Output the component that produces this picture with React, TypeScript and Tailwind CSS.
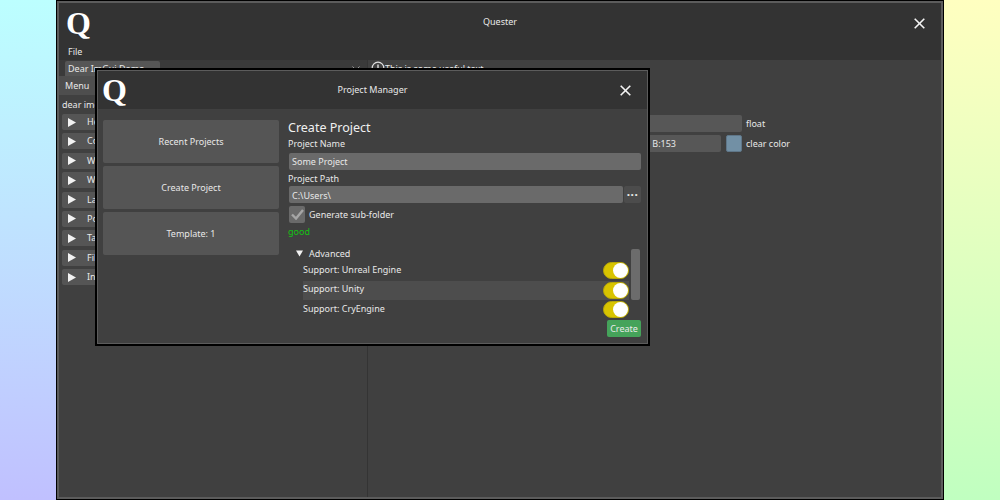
const font = { fontFamily: '"Noto Sans", sans-serif' };

function Close() {
  return (
    <svg width="11" height="11" viewBox="0 0 11 11" className="block">
      <path d="M0.7 0.7 L10.3 10.3 M10.3 0.7 L0.7 10.3" stroke="#f4f4f4" strokeWidth="1.6" fill="none" />
    </svg>
  );
}

function Logo() {
  return <span className="block text-[32px] leading-none font-bold text-white" style={{ fontFamily: '"Liberation Serif", serif' }}>Q</span>;
}

function Tri() {
  return (
    <svg width="8" height="9" viewBox="0 0 8 9" className="block shrink-0">
      <path d="M0 0 L8 4.5 L0 9 Z" fill="#f2f2f2" />
    </svg>
  );
}

function Toggle() {
  return (
    <div className="flex h-[17px] w-[26px] shrink-0 items-center justify-end rounded-full border border-[#b8a808] bg-[#d8c400]">
      <div className="h-[15px] w-[15px] rounded-full bg-white" />
    </div>
  );
}

function Side({ label, h }: { label: string; h: string }) {
  return (
    <div className={`flex ${h} items-center justify-center rounded-[2px] bg-[#555555]`}>{label}</div>
  );
}

function Support({ label, active }: { label: string; active?: boolean }) {
  return (
    <div className={`flex h-[19.5px] items-center justify-between ${active ? 'bg-[#4d4d4d]' : ''}`}>
      <span className="pb-[2px]">{label}</span>
      <Toggle />
    </div>
  );
}

export default function App() {
  const items = ['Help', 'Configuration', 'Window options', 'Widgets', 'Layout & Scrolling', 'Popups & Modal windows', 'Tables & Columns', 'Filtering', 'Inputs'];
  return (
    <div className="relative flex h-[500px] w-[1000px] overflow-hidden text-[9px] leading-[14px]" style={font}>
      <div className="w-[56px] shrink-0 bg-gradient-to-b from-[#bcffff] to-[#c0c0ff]" />
      <div className="h-full w-[888px] shrink-0 border border-black">
        <div className="flex h-full flex-col border-2 border-[#5c5c5c] bg-[#404040] text-[#e8e8e8]">
          <div className="grid h-[40px] shrink-0 grid-cols-3 items-center bg-[#333333] pl-[7px] pr-[16px]">
            <Logo />
            <span className="pb-[2px] pl-[9px] text-center">Quester</span>
            <div className="justify-self-end"><Close /></div>
          </div>
          <div className="flex h-[17px] shrink-0 items-center bg-[#333333] pl-[9px]">File</div>
          <div className="flex min-h-0 flex-1">
            <div className="flex w-[309px] shrink-0 flex-col border-r border-[#343434]">
              <div className="flex h-[16px] shrink-0 items-end justify-between bg-[#3a3a3a] pl-[6px] pr-[7px]">
                <div className="flex h-[15px] w-[95px] items-center rounded-t-[2px] bg-[#565656] pl-[3px]">Dear ImGui Demo</div>
                <svg width="8" height="5" viewBox="0 0 8 5" className="mb-[5px] block"><path d="M0.5 0.5 L4 4 L7.5 0.5" stroke="#9a9a9a" strokeWidth="1" fill="none" /></svg>
              </div>
              <div className="flex h-[19px] shrink-0 items-center bg-[#4e4e4e] pl-[6px]">Menu</div>
              <div className="flex h-[19px] shrink-0 items-center pl-[3px]">dear imgui says hello.</div>
              <div className="flex flex-col gap-[3.4px] px-[3px]">
                {items.map((t) => (
                  <div key={t} className="flex h-[16px] items-center gap-[11px] rounded-[2px] bg-[#555555] pl-[6px]">
                    <Tri />
                    <span>{t}</span>
                  </div>
                ))}
              </div>
            </div>
            <div className="flex flex-1 flex-col">
              <div className="flex h-[16px] shrink-0 items-start pl-[3px] pt-[1px]">
                <svg width="14" height="14" viewBox="0 0 14 14" className="block shrink-0">
                  <circle cx="7" cy="7" r="5.8" fill="none" stroke="#e0e0e0" strokeWidth="1.2" />
                  <path d="M7 3.5 V8 M7 9.4 V10.6" stroke="#e0e0e0" strokeWidth="1.4" />
                </svg>
                <span className="pt-[1px]">This is some useful text</span>
              </div>
              <div className="mt-[39px] flex h-[17px] items-center pl-[1px]">
                <div className="h-[17px] w-[373px] rounded-[2px] bg-[#575757]" />
                <span className="ml-[4px] pt-[1px]">float</span>
              </div>
              <div className="mt-[3px] flex h-[17px] items-center pl-[1px]">
                <div className="flex h-[17px] w-[352px] items-center justify-end rounded-[2px] bg-[#575757] pr-[45px] pt-[1px]">B:153</div>
                <div className="ml-[5px] h-[17px] w-[16px] rounded-[2px] border border-[#5f7688] bg-[#7290a5]" />
                <span className="ml-[4px] pt-[1px]">clear color</span>
              </div>
            </div>
          </div>
        </div>
      </div>
      <div className="w-[56px] shrink-0 bg-gradient-to-b from-[#ffffc0] to-[#c0ffc0]" />

      <div className="absolute left-[95px] top-[68px] h-[278px] w-[555px] border-2 border-black">
        <div className="flex h-full flex-col border border-[#5c5c5c] bg-[#404040] text-[#e8e8e8]">
          <div className="grid h-[38px] shrink-0 grid-cols-3 items-center bg-[#333333] pl-[4px] pr-[16px]">
            <Logo />
            <span className="pl-[12px] text-center">Project Manager</span>
            <div className="justify-self-end"><Close /></div>
          </div>
          <div className="flex flex-1 pl-[5px] pr-[6px] pt-[11px]">
            <div className="flex w-[176px] shrink-0 flex-col gap-[3px]">
              <Side label="Recent Projects" h="h-[43px]" />
              <Side label="Create Project" h="h-[43px]" />
              <Side label="Template: 1" h="h-[43px]" />
            </div>
            <div className="ml-[9px] flex min-w-0 flex-1 flex-col">
              <div className="h-[16px] text-[12.5px] leading-[16px] text-[#f0f0f0]">Create Project</div>
              <div className="flex h-[16px] items-center">Project Name</div>
              <div className="ml-[1px] mt-[1px] flex h-[17px] items-center rounded-[2px] bg-[#6a6a6a] pl-[3px] pt-[1px]">Some Project</div>
              <div className="flex h-[16px] items-center pt-[1px]">Project Path</div>
              <div className="ml-[1px] flex h-[17px] gap-[1px]">
                <div className="flex flex-1 items-center rounded-[2px] bg-[#6a6a6a] pl-[3px] pt-[2px]">C:\Users\</div>
                <div className="flex w-[17px] items-center justify-center rounded-[2px] bg-[#4c4c4c] pb-[6px] text-[12px] font-bold leading-none tracking-[0.5px]">...</div>
              </div>
              <div className="ml-[1px] mt-[3px] flex h-[17px] items-center gap-[4px]">
                <div className="flex h-[17px] w-[16px] items-center justify-center rounded-[2px] bg-[#6a6a6a]">
                  <svg width="13" height="11" viewBox="0 0 13 11"><path d="M1 5.5 L5 9.5 L12 1" stroke="#a6a6a6" strokeWidth="2.4" fill="none" /></svg>
                </div>
                <span>Generate sub-folder</span>
              </div>
              <div className="mt-[1px] flex h-[16px] items-center text-[#12c412]">good</div>
              <div className="mt-[6px] flex min-h-0">
                <div className="min-w-0 flex-1 pl-[8px]">
                  <div className="flex h-[15px] items-center gap-[6px]">
                    <svg width="7" height="7" viewBox="0 0 7 7" className="block"><path d="M0 0.5 H7 L3.5 6.5 Z" fill="#f2f2f2" /></svg>
                    <span>Advanced</span>
                  </div>
                  <div className="pl-[7px]">
                    <Support label="Support: Unreal Engine" />
                    <Support label="Support: Unity" active />
                    <Support label="Support: CryEngine" />
                  </div>
                </div>
                <div className="ml-[2px] mr-[1px] mt-[3px] h-[51px] w-[9px] rounded-[2px] bg-[#6c6c6c]" />
              </div>
              <div className="mt-[0.5px] flex justify-end">
                <div className="flex h-[17px] w-[34px] items-center justify-center rounded-[2px] bg-[#45a35a] text-[#eaeaea]">Create</div>
              </div>
            </div>
          </div>
        </div>
      </div>
    </div>
  );
}
